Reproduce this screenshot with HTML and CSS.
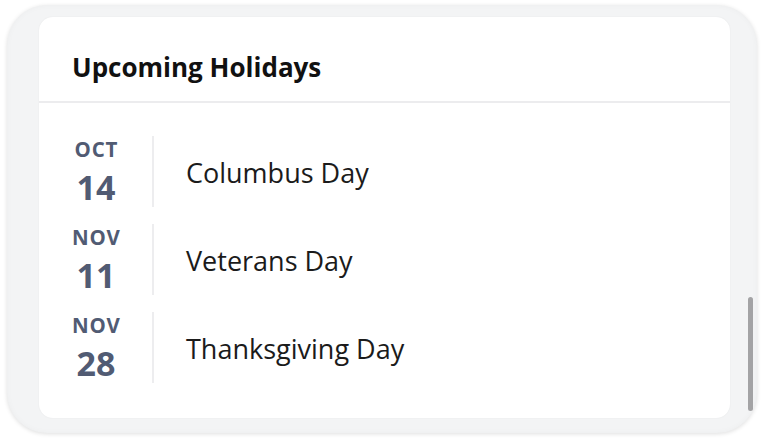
FILE: index.html
```html
<!DOCTYPE html>
<html>
<head>
<meta charset="utf-8">
<link rel="stylesheet" href="styles.css">
</head>
<body>
<div class="frame">
  <div class="card">
    <div class="card-header">
      <h2 class="title">Upcoming Holidays</h2>
    </div>
    <ul class="list">
      <li class="row">
        <div class="date"><span class="month">OCT</span><span class="day">14</span></div>
        <div class="divider"></div>
        <div class="name">Columbus Day</div>
      </li>
      <li class="row">
        <div class="date"><span class="month">NOV</span><span class="day">11</span></div>
        <div class="divider"></div>
        <div class="name">Veterans Day</div>
      </li>
      <li class="row">
        <div class="date"><span class="month">NOV</span><span class="day">28</span></div>
        <div class="divider"></div>
        <div class="name">Thanksgiving Day</div>
      </li>
    </ul>
  </div>
  <div class="thumb"></div>
</div>
</body>
</html>
```

FILE: styles.css
```css
html, body {
  margin: 0;
  padding: 0;
  background: #ffffff;
}
body {
  width: 768px;
  height: 438px;
  overflow: hidden;
  font-family: "Open Sans", Lato, "Liberation Sans", sans-serif;
}
.frame {
  position: relative;
  box-sizing: border-box;
  margin: 5px 11px 0 7px;
  height: 428px;
  border-radius: 40px;
  background: #f3f4f5;
  box-shadow: 0 1px 4px rgba(0, 0, 0, 0.13), inset 0 0 6px rgba(0, 0, 0, 0.03);
  padding: 12px 27px 15px 32px;
}
.card {
  height: 401px;
  background: #ffffff;
  border-radius: 14px;
  box-shadow: 0 0 2px rgba(0, 0, 0, 0.06);
  overflow: hidden;
}
.card-header {
  height: 86px;
  box-sizing: border-box;
  border-bottom: 2px solid #ececee;
  padding: 35px 0 0 33px;
}
.title {
  margin: 0;
  font-size: 26px;
  line-height: 30px;
  font-weight: 700;
  color: #111111;
}
.list {
  list-style: none;
  margin: 0;
  padding: 25px 0 0 17px;
}
.row {
  display: flex;
  align-items: center;
  padding: 8px 0 9px;
  height: 71px;
}
.date {
  width: 80px;
  display: flex;
  flex-direction: column;
  align-items: center;
  color: #515b73;
  line-height: 1;
}
.month {
  font-size: 20.5px;
  font-weight: 700;
  letter-spacing: 0.8px;
  margin-right: -0.8px;
}
.day {
  margin-top: 10px;
  font-size: 34px;
  font-weight: 700;
}
.divider {
  width: 2px;
  align-self: stretch;
  background: #ededef;
  margin-left: 16px;
}
.name {
  margin-left: 32px;
  font-size: 27px;
  color: #1b1b1b;
  padding-top: 1px;
}
.thumb {
  position: absolute;
  right: 4px;
  top: 292px;
  width: 5px;
  height: 114px;
  border-radius: 3px;
  background: #a3a3a5;
}
```
